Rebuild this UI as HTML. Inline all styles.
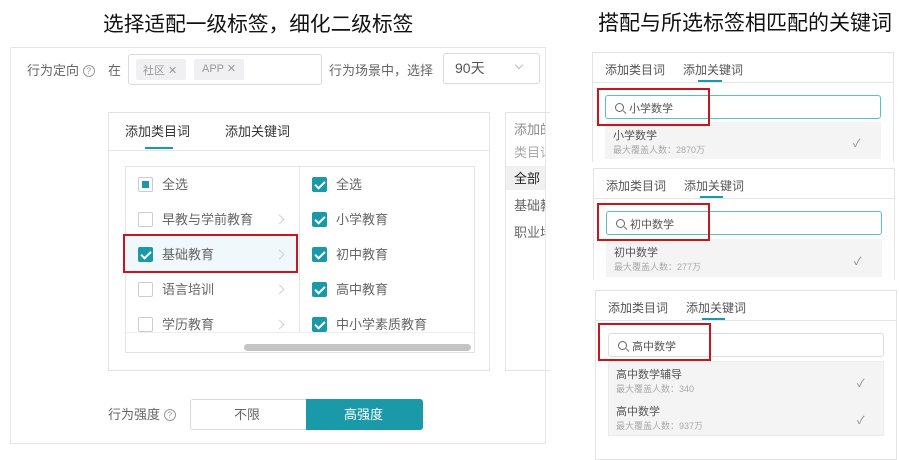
<!DOCTYPE html><html><head><meta charset="utf-8"><style>
*{margin:0;padding:0;box-sizing:border-box}
body{width:899px;height:445px;background:#fff;position:relative;overflow:hidden;font-family:"Liberation Sans","Noto Sans CJK SC",sans-serif;color:#333}
.a{position:absolute;white-space:nowrap}
.t{font-size:13px;color:#666;margin-top:-2px}
.cb{position:absolute;width:15px;height:15px;border:1px solid #ccc;border-radius:2px;background:#fff}
.cb.on{background:#1a9aa8;border-color:#1a9aa8}
.cb.on:after{content:"";position:absolute;left:4px;top:1px;width:4px;height:8px;border:solid #fff;border-width:0 2px 2px 0;transform:rotate(45deg)}
.cb.half:after{content:"";position:absolute;left:3px;top:3px;width:7px;height:7px;background:#1a9aa8}
.arr{position:absolute;width:7px;height:7px;border:solid #d0d0d0;border-width:1px 1px 0 0;transform:rotate(45deg)}
.q{display:inline-block;width:12px;height:12px;border:1px solid #999;border-radius:50%;font-size:9px;line-height:10px;text-align:center;color:#999;vertical-align:1px}
.box{position:absolute;border:1px solid #e3e3e3}
.red{position:absolute;border:2px solid #c8161d}
.mag{display:inline-block;width:9px;height:9px;border:1.3px solid #666;border-radius:50%;position:relative;margin-right:5px}
.mag:after{content:"";position:absolute;width:1.3px;height:4px;background:#666;left:8px;top:6px;transform:rotate(-45deg)}
.sm{font-size:9px;color:#aaa}
.k{font-size:11px;color:#555}
.ck{position:absolute;color:#888;font-size:11px}
</style></head><body>
<div class="a" style="left:103px;top:7px;font-size:20.7px;color:#111">选择适配一级标签，细化二级标签</div>
<div class="a" style="left:598px;top:7px;font-size:21px;color:#111">搭配与所选标签相匹配的关键词</div>

<div class="box" style="left:10px;top:47px;width:536px;height:397px;border-color:#e6e6e6"></div>
<div class="a t" style="left:27px;top:62px">行为定向 <span class="q">?</span></div>
<div class="a t" style="left:108px;top:62px">在</div>
<div class="box" style="left:128px;top:54px;width:194px;height:31px;border-color:#d9d9d9;border-radius:3px"></div>
<div class="a" style="left:136px;top:59px;width:50px;height:21px;background:#f0f0f2;border-radius:2px;font-size:11px;color:#999;padding:3px 0 0 7px">社区 ✕</div>
<div class="a" style="left:194px;top:59px;width:50px;height:21px;background:#f0f0f2;border-radius:2px;font-size:11px;color:#999;padding:3px 0 0 8px">APP ✕</div>
<div class="a t" style="left:329px;top:62px">行为场景中，选择</div>
<div class="box" style="left:443px;top:53px;width:97px;height:31px;border-color:#d9d9d9;border-radius:3px"></div>
<div class="a" style="left:455px;top:58px;font-size:14px;color:#555">90天</div>
<div class="a" style="left:516px;top:62px;width:6px;height:6px;border:solid #bbb;border-width:0 1px 1px 0;transform:rotate(45deg)"></div>

<div class="box" style="left:108px;top:112px;width:382px;height:259px"></div>
<div class="a t" style="left:125px;top:123px;color:#333">添加类目词</div>
<div class="a t" style="left:225px;top:123px;color:#333">添加关键词</div>
<div class="a" style="left:145px;top:147px;width:28px;height:2px;background:#1a9aa8"></div>
<div class="a" style="left:109px;top:150px;width:380px;height:1px;background:#e6e6e6"></div>
<div class="box" style="left:125px;top:166px;width:350px;height:187px"></div>
<div class="a" style="left:299px;top:167px;width:1px;height:165px;background:#e6e6e6"></div>
<div class="a" style="left:126px;top:332px;width:348px;height:1px;background:#eee"></div>
<div class="a" style="left:244px;top:344px;width:227px;height:7px;background:#c4c4c4;border-radius:4px"></div>
<div class="a" style="left:124px;top:235px;width:174px;height:37px;background:#f0f8fb"></div>
<div class="cb half" style="left:138px;top:177px"></div><div class="a t" style="left:162px;top:176px">全选</div>
<div class="cb" style="left:138px;top:212px"></div><div class="a t" style="left:162px;top:211px">早教与学前教育</div><div class="arr" style="left:276px;top:216px"></div>
<div class="cb on" style="left:138px;top:247px"></div><div class="a t" style="left:162px;top:246px">基础教育</div><div class="arr" style="left:276px;top:251px"></div>
<div class="cb" style="left:138px;top:282px"></div><div class="a t" style="left:162px;top:281px">语言培训</div><div class="arr" style="left:276px;top:286px"></div>
<div class="cb" style="left:138px;top:317px"></div><div class="a t" style="left:162px;top:316px">学历教育</div><div class="arr" style="left:276px;top:321px"></div>
<div class="cb on" style="left:312px;top:177px"></div><div class="a t" style="left:336px;top:176px">全选</div>
<div class="cb on" style="left:312px;top:212px"></div><div class="a t" style="left:336px;top:211px">小学教育</div>
<div class="cb on" style="left:312px;top:247px"></div><div class="a t" style="left:336px;top:246px">初中教育</div>
<div class="cb on" style="left:312px;top:282px"></div><div class="a t" style="left:336px;top:281px">高中教育</div>
<div class="cb on" style="left:312px;top:317px"></div><div class="a t" style="left:336px;top:316px">中小学素质教育</div>
<div class="red" style="left:123px;top:234px;width:175px;height:39px"></div>

<div class="box" style="left:505px;top:112px;width:45px;height:259px;border-right:none"></div>
<div style="position:absolute;left:506px;top:113px;width:39px;height:257px;overflow:hidden">
<div class="a" style="left:8px;top:6px;font-size:13px;color:#888">添加的</div>
<div class="a" style="left:8px;top:29px;font-size:13px;color:#aaa">类目词</div>
<div class="a" style="left:0;top:53px;width:40px;height:24px;background:#f0f0f0"></div>
<div class="a" style="left:8px;top:55px;font-size:13px;color:#222">全部</div>
<div class="a" style="left:8px;top:82px;font-size:13px;color:#666">基础教</div>
<div class="a" style="left:8px;top:109px;font-size:13px;color:#666">职业培</div>
</div>

<div class="a t" style="left:108px;top:406px">行为强度 <span class="q">?</span></div>
<div class="box" style="left:190px;top:399px;width:233px;height:31px;border-color:#d9d9d9;border-radius:3px"></div>
<div class="a" style="left:306px;top:399px;width:117px;height:31px;background:#1a9aa8;border-radius:0 3px 3px 0"></div>
<div class="a t" style="left:234px;top:406px">不限</div>
<div class="a t" style="left:344px;top:406px;color:#fff">高强度</div>

<div class="box" style="left:592px;top:52px;width:302px;height:110px;border-bottom:none"></div>
<div class="a k" style="left:605px;top:61px;font-size:12px">添加类目词</div>
<div class="a k" style="left:683px;top:61px;font-size:12px">添加关键词</div>
<div class="a" style="left:698px;top:80px;width:24px;height:2px;background:#1a9aa8"></div>
<div class="a" style="left:593px;top:82px;width:300px;height:1px;background:#e6e6e6"></div>
<div class="box" style="left:605px;top:95px;width:276px;height:24px;border-color:#5bbfca;border-radius:3px"></div>
<div class="a k" style="left:615px;top:100px"><span class="mag"></span>小学数学</div>
<div class="a" style="left:605px;top:122px;width:276px;height:37px;background:#f4f4f4"></div>
<div class="a k" style="left:613px;top:127px">小学数学</div>
<div class="a sm" style="left:613px;top:143px">最大覆盖人数：2870万</div>
<div class="ck" style="left:853px;top:135px">✓</div>
<div class="red" style="left:597px;top:88px;width:113px;height:38px"></div>

<div class="box" style="left:593px;top:168px;width:302px;height:112px;border-bottom:none"></div>
<div class="a k" style="left:606px;top:177px;font-size:12px">添加类目词</div>
<div class="a k" style="left:684px;top:177px;font-size:12px">添加关键词</div>
<div class="a" style="left:700px;top:196px;width:23px;height:2px;background:#1a9aa8"></div>
<div class="a" style="left:594px;top:198px;width:300px;height:1px;background:#e6e6e6"></div>
<div class="box" style="left:606px;top:211px;width:276px;height:24px;border-color:#5bbfca;border-radius:3px"></div>
<div class="a k" style="left:616px;top:216px"><span class="mag"></span>初中数学</div>
<div class="a" style="left:606px;top:239px;width:276px;height:38px;background:#f4f4f4"></div>
<div class="a k" style="left:614px;top:244px">初中数学</div>
<div class="a sm" style="left:614px;top:260px">最大覆盖人数：277万</div>
<div class="ck" style="left:854px;top:253px">✓</div>
<div class="red" style="left:597px;top:203px;width:113px;height:38px"></div>

<div class="box" style="left:595px;top:290px;width:302px;height:170px"></div>
<div class="a k" style="left:608px;top:299px;font-size:12px">添加类目词</div>
<div class="a k" style="left:686px;top:299px;font-size:12px">添加关键词</div>
<div class="a" style="left:702px;top:318px;width:23px;height:2px;background:#1a9aa8"></div>
<div class="a" style="left:596px;top:320px;width:300px;height:1px;background:#e6e6e6"></div>
<div class="box" style="left:608px;top:333px;width:276px;height:24px;border-color:#ddd;border-radius:3px"></div>
<div class="a k" style="left:618px;top:338px"><span class="mag"></span>高中数学</div>
<div class="a" style="left:608px;top:361px;width:276px;height:75px;background:#f4f4f4;border:1px solid #ececec"></div>
<div class="a k" style="left:616px;top:366px">高中数学辅导</div>
<div class="a sm" style="left:616px;top:382px">最大覆盖人数：340</div>
<div class="ck" style="left:857px;top:375px">✓</div>
<div class="a k" style="left:616px;top:403px">高中数学</div>
<div class="a sm" style="left:616px;top:419px">最大覆盖人数：937万</div>
<div class="ck" style="left:857px;top:412px">✓</div>
<div class="red" style="left:598px;top:323px;width:113px;height:38px"></div>
</body></html>
